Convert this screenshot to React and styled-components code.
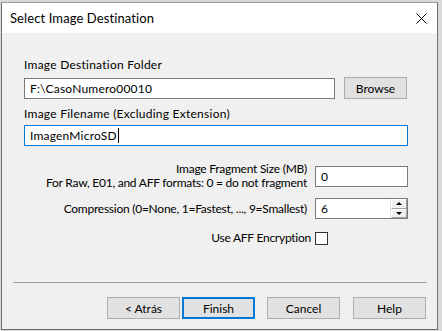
import styled, { createGlobalStyle } from "styled-components";

const GlobalStyle = createGlobalStyle`
  html, body {
    margin: 0;
    padding: 0;
    background: #d9d9d9;
  }
  body {
    font-family: Lato, "Noto Sans", sans-serif;
    font-size: 12px;
    color: #000;
  }
`;

const Window = styled.div`
  margin: 2px 0 0 1px;
  width: 437px;
  height: 328px;
  box-sizing: border-box;
  border: 1px solid #6f6f6f;
  border-top-color: #9a9a9a;
  background: #f0f0f0;
  display: flex;
  flex-direction: column;
`;

const TitleBar = styled.div`
  height: 30px;
  background: #fff;
  display: flex;
  align-items: center;
  justify-content: space-between;
  padding: 0 10px 0 8px;
  font-size: 13px;
  letter-spacing: 0.1px;
`;

const CloseIcon = styled.svg`
  width: 11px;
  height: 11px;
`;

const Body = styled.div`
  display: flex;
  flex-direction: column;
  padding: 24px 0 0 22px;
`;

const Label = styled.div`
  line-height: 16px;
  white-space: nowrap;
  letter-spacing: 0.25px;
  margin-top: ${(p) => p.$top || 0}px;
`;

const Row = styled.div`
  display: flex;
  align-items: center;
  width: 384px;
  margin-top: ${(p) => p.$top || 0}px;
  justify-content: ${(p) => (p.$right ? "flex-end" : "flex-start")};
  gap: ${(p) => p.$gap || 0}px;
`;

const TextBox = styled.div`
  position: relative;
  flex: none;
  box-sizing: border-box;
  width: ${(p) => p.$w}px;
  height: 21px;
  background: #fff;
  border: 1px solid ${(p) => (p.$focus ? "#0078d7" : "#7a7a7a")};
  padding: 0 5px;
  display: flex;
  align-items: center;
  line-height: 19px;
  white-space: nowrap;
  letter-spacing: 0.2px;
`;

const Caret = styled.span`
  display: inline-block;
  width: 1px;
  height: 15px;
  background: #000;
  margin-left: 1px;
`;

const Button = styled.div`
  box-sizing: border-box;
  flex: none;
  width: ${(p) => p.$w || 73}px;
  height: 22px;
  background: #e1e1e1;
  border: ${(p) => (p.$default ? "2px solid #0078d7" : "1px solid #adadad")};
  display: flex;
  align-items: center;
  justify-content: center;
  margin-left: ${(p) => p.$left || 0}px;
`;

const RightText = styled.div`
  text-align: right;
  white-space: nowrap;
  line-height: 14px;
  letter-spacing: -0.25px;
  margin-right: ${(p) => p.$gap ?? 8}px;
`;

const Spinner = styled.div`
  position: absolute;
  right: 0;
  top: 0;
  bottom: 0;
  width: 16px;
  display: flex;
  flex-direction: column;
  border-left: 1px solid #e3e3e3;
`;

const SpinBtn = styled.div`
  flex: 1;
  background: #f0f0f0;
  border: 1px solid #fff;
  border-right-color: #a0a0a0;
  border-bottom-color: #a0a0a0;
  display: flex;
  align-items: center;
  justify-content: center;
`;

const Arrow = styled.span`
  width: 0;
  height: 0;
  border-left: 3px solid transparent;
  border-right: 3px solid transparent;
  ${(p) =>
    p.$up ? "border-bottom: 3px solid #000;" : "border-top: 3px solid #000;"}
`;

const CheckBox = styled.div`
  box-sizing: border-box;
  flex: none;
  width: 13px;
  height: 13px;
  background: #fff;
  border: 1px solid #333;
  margin-right: 80px;
`;

const Separator = styled.div`
  height: 1px;
  background: #a0a0a0;
  margin: auto 10px 0 11px;
`;

const Footer = styled.div`
  display: flex;
  padding: 14px 10px 10px 105px;
`;

export default function App() {
  return (
    <>
      <GlobalStyle />
      <Window>
        <TitleBar>
          <span>Select Image Destination</span>
          <CloseIcon viewBox="0 0 11 11">
            <path d="M0.5 0.5 L10.5 10.5 M10.5 0.5 L0.5 10.5" stroke="#000" strokeWidth="1" fill="none" />
          </CloseIcon>
        </TitleBar>
        <Body>
          <Label>Image Destination Folder</Label>
          <Row $top={4} $gap={9}>
            <TextBox $w={311}>F:\CasoNumero00010</TextBox>
            <Button $w={63}>Browse</Button>
          </Row>
          <Label $top={7}>Image Filename (Excluding Extension)</Label>
          <Row $top={3}>
            <TextBox $w={384} $focus>
              ImagenMicroSD<Caret />
            </TextBox>
          </Row>
          <Row $top={16} $right>
            <RightText>
              Image Fragment Size (MB)
              <br />
              For Raw, E01, and AFF formats: 0 = do not fragment
            </RightText>
            <TextBox $w={93}>0</TextBox>
          </Row>
          <Row $top={8} $right>
            <RightText>Compression (0=None, 1=Fastest, ..., 9=Smallest)</RightText>
            <TextBox $w={93}>
              6
              <Spinner>
                <SpinBtn><Arrow $up /></SpinBtn>
                <SpinBtn><Arrow /></SpinBtn>
              </Spinner>
            </TextBox>
          </Row>
          <Row $top={12} $right>
            <RightText $gap={4}>Use AFF Encryption</RightText>
            <CheckBox />
          </Row>
        </Body>
        <Separator />
        <Footer>
          <Button>&lt; Atrás</Button>
          <Button $default $left={2}>Finish</Button>
          <Button $left={12}>Cancel</Button>
          <Button $left={13}>Help</Button>
        </Footer>
      </Window>
    </>
  );
}
